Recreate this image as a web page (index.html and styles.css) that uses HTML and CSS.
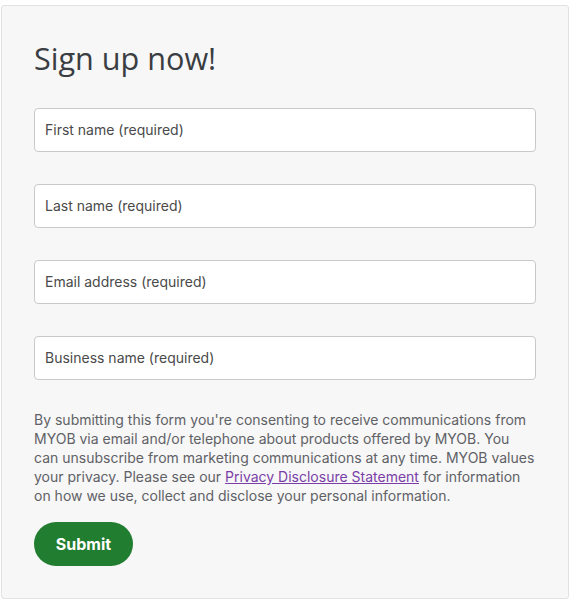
FILE: index.html
```html
<!DOCTYPE html>
<html>
<head>
<meta charset="utf-8">
<link rel="stylesheet" href="styles.css">
</head>
<body>
<form class="card">
  <h1 class="title">Sign up now!</h1>
  <div class="fields">
    <input class="field" type="text" placeholder="First name (required)">
    <input class="field" type="text" placeholder="Last name (required)">
    <input class="field" type="email" placeholder="Email address (required)">
    <input class="field" type="text" placeholder="Business name (required)">
  </div>
  <p class="consent">By submitting this form you're consenting to receive communications from MYOB via email and/or telephone about products offered by MYOB. You can unsubscribe from marketing communications at any time. MYOB values your privacy. Please see our <a href="#" class="link">Privacy Disclosure Statement</a> for information on how we use, collect and disclose your personal information.</p>
  <button class="submit" type="button">Submit</button>
</form>
</body>
</html>
```
FILE: styles.css
```css
html, body {
  margin: 0;
  padding: 0;
  background: #ffffff;
}
body {
  padding: 5px 0 0 1px;
}
.card {
  box-sizing: border-box;
  width: 568px;
  height: 594px;
  background: #f7f7f7;
  border: 1px solid #e2e2e2;
  border-radius: 3px;
  padding: 0 32px 0 32px;
  display: flex;
  flex-direction: column;
  font-family: Inter, "Noto Sans", sans-serif;
}
.title {
  margin: 32px 0 0 0;
  font-family: "Open Sans", sans-serif;
  font-weight: 400;
  font-size: 30.6px;
  line-height: 40px;
  color: #3a3d42;
}
.fields {
  margin-top: 30px;
  display: flex;
  flex-direction: column;
  gap: 32px;
}
.field {
  box-sizing: border-box;
  width: 502px;
  height: 44px;
  border: 1px solid #c9c9c9;
  border-radius: 4px;
  background: #ffffff;
  padding: 0 10px 1px 10px;
  font-family: Inter, "Noto Sans", sans-serif;
  font-size: 14px;
  color: #444;
  outline: none;
}
.field::placeholder {
  color: #4a4a4a;
  opacity: 1;
}
.consent {
  margin: 30px 0 0 0;
  width: 502px;
  font-size: 14px;
  line-height: 19px;
  color: #5f6166;
}
.link {
  color: #7a3ea8;
  text-decoration: underline;
}
.submit {
  margin-top: 17px;
  align-self: flex-start;
  width: 99px;
  height: 44px;
  border: none;
  border-radius: 22px;
  background: #217d30;
  color: #ffffff;
  font-family: Inter, "Noto Sans", sans-serif;
  font-weight: 700;
  font-size: 16px;
  padding: 0;
}
```
